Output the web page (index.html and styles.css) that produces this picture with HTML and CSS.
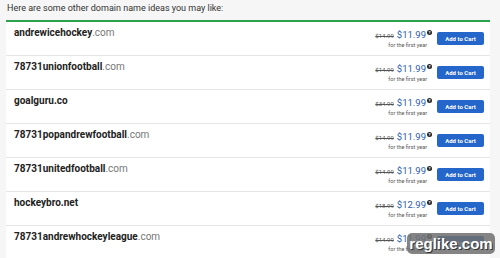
FILE: index.html
```html
<!DOCTYPE html>
<html>
<head>
<meta charset="utf-8">
<link rel="stylesheet" href="styles.css">
</head>
<body>
<div class="page">
  <p class="intro">Here are some other domain name ideas you may like:</p>
  <div class="list">
    <div class="row">
      <div class="domain"><b>andrewicehockey</b><span class="tld">.com</span></div>
      <div class="offer">
        <div class="pricing">
          <div class="prices"><s class="old">$14.99</s><span class="now">$11.99</span><span class="help">?</span></div>
          <div class="note">for the first year</div>
        </div>
        <button class="cart">Add to Cart</button>
      </div>
    </div>
    <div class="row">
      <div class="domain"><b>78731unionfootball</b><span class="tld">.com</span></div>
      <div class="offer">
        <div class="pricing">
          <div class="prices"><s class="old">$14.99</s><span class="now">$11.99</span><span class="help">?</span></div>
          <div class="note">for the first year</div>
        </div>
        <button class="cart">Add to Cart</button>
      </div>
    </div>
    <div class="row">
      <div class="domain"><b>goalguru.co</b></div>
      <div class="offer">
        <div class="pricing">
          <div class="prices"><s class="old">$34.99</s><span class="now">$11.99</span><span class="help">?</span></div>
          <div class="note">for the first year</div>
        </div>
        <button class="cart">Add to Cart</button>
      </div>
    </div>
    <div class="row">
      <div class="domain"><b>78731popandrewfootball</b><span class="tld">.com</span></div>
      <div class="offer">
        <div class="pricing">
          <div class="prices"><s class="old">$14.99</s><span class="now">$11.99</span><span class="help">?</span></div>
          <div class="note">for the first year</div>
        </div>
        <button class="cart">Add to Cart</button>
      </div>
    </div>
    <div class="row">
      <div class="domain"><b>78731unitedfootball</b><span class="tld">.com</span></div>
      <div class="offer">
        <div class="pricing">
          <div class="prices"><s class="old">$14.99</s><span class="now">$11.99</span><span class="help">?</span></div>
          <div class="note">for the first year</div>
        </div>
        <button class="cart">Add to Cart</button>
      </div>
    </div>
    <div class="row">
      <div class="domain"><b>hockeybro.net</b></div>
      <div class="offer">
        <div class="pricing">
          <div class="prices"><s class="old">$18.99</s><span class="now">$12.99</span><span class="help">?</span></div>
          <div class="note">for the first year</div>
        </div>
        <button class="cart">Add to Cart</button>
      </div>
    </div>
    <div class="row">
      <div class="domain"><b>78731andrewhockeyleague</b><span class="tld">.com</span></div>
      <div class="offer">
        <div class="pricing">
          <div class="prices"><s class="old">$14.99</s><span class="now">$11.99</span><span class="help">?</span></div>
          <div class="note">for the first year</div>
        </div>
        <button class="cart">Add to Cart</button>
      </div>
    </div>
  </div>
</div>
<div class="watermark">reglike.com</div>
</body>
</html>
```

FILE: styles.css
```css
html, body {
  margin: 0;
  padding: 0;
  background: #f6f6f6;
  height: 258px;
  overflow: hidden;
}
body {
  font-family: Roboto, "Liberation Sans", sans-serif;
  color: #222;
  position: relative;
}
.page {
  padding: 0 10px 0 6px;
}
.intro {
  margin: 0;
  padding: 2px 0 0 1px;
  height: 18px;
  font-size: 9px;
  line-height: 12px;
  color: #333;
}
.list {
  background: #fff;
  border-top: 2px solid #2ca14f;
}
.row {
  display: flex;
  justify-content: space-between;
  height: 33px;
  border-bottom: 1px solid #e6e6e6;
  padding: 0 6px 0 8px;
}
.domain {
  padding-top: 5px;
  font-size: 10px;
  line-height: 12px;
  color: #222;
}
.domain b {
  font-weight: 700;
}
.tld {
  color: #777;
}
.offer {
  display: flex;
  align-items: center;
  gap: 5px;
}
.pricing {
  display: flex;
  flex-direction: column;
  align-items: flex-end;
  margin-top: 1px;
}
.prices {
  display: flex;
  align-items: baseline;
  gap: 3px;
  height: 11px;
}
.old {
  font-size: 6px;
  color: #555;
}
.now {
  font-size: 9.5px;
  color: #2a5db0;
  line-height: 11px;
}
.help {
  align-self: flex-start;
  margin-top: 1px;
  width: 5px;
  height: 5px;
  border-radius: 50%;
  background: #222;
  color: #fff;
  font-size: 4px;
  font-weight: 700;
  line-height: 5px;
  text-align: center;
  margin-left: -2px;
}
.note {
  font-size: 5.5px;
  line-height: 8px;
  color: #555;
  margin-right: 5px;
  margin-top: 1px;
}
.cart {
  width: 47px;
  height: 13px;
  padding: 0;
  border: 0;
  border-radius: 2px;
  background: #2466c9;
  color: #fff;
  font-family: Roboto, "Liberation Sans", sans-serif;
  font-size: 6px;
  font-weight: 700;
}
.watermark {
  position: absolute;
  left: 407px;
  top: 233px;
  width: 88px;
  height: 21px;
  border-radius: 5px;
  background: rgba(110, 110, 110, 0.85);
  color: #fff;
  font-family: "Liberation Sans", sans-serif;
  font-weight: 700;
  font-size: 15px;
  line-height: 21px;
  text-align: center;
  text-shadow: 1px 1px 0 #333;
}
```
